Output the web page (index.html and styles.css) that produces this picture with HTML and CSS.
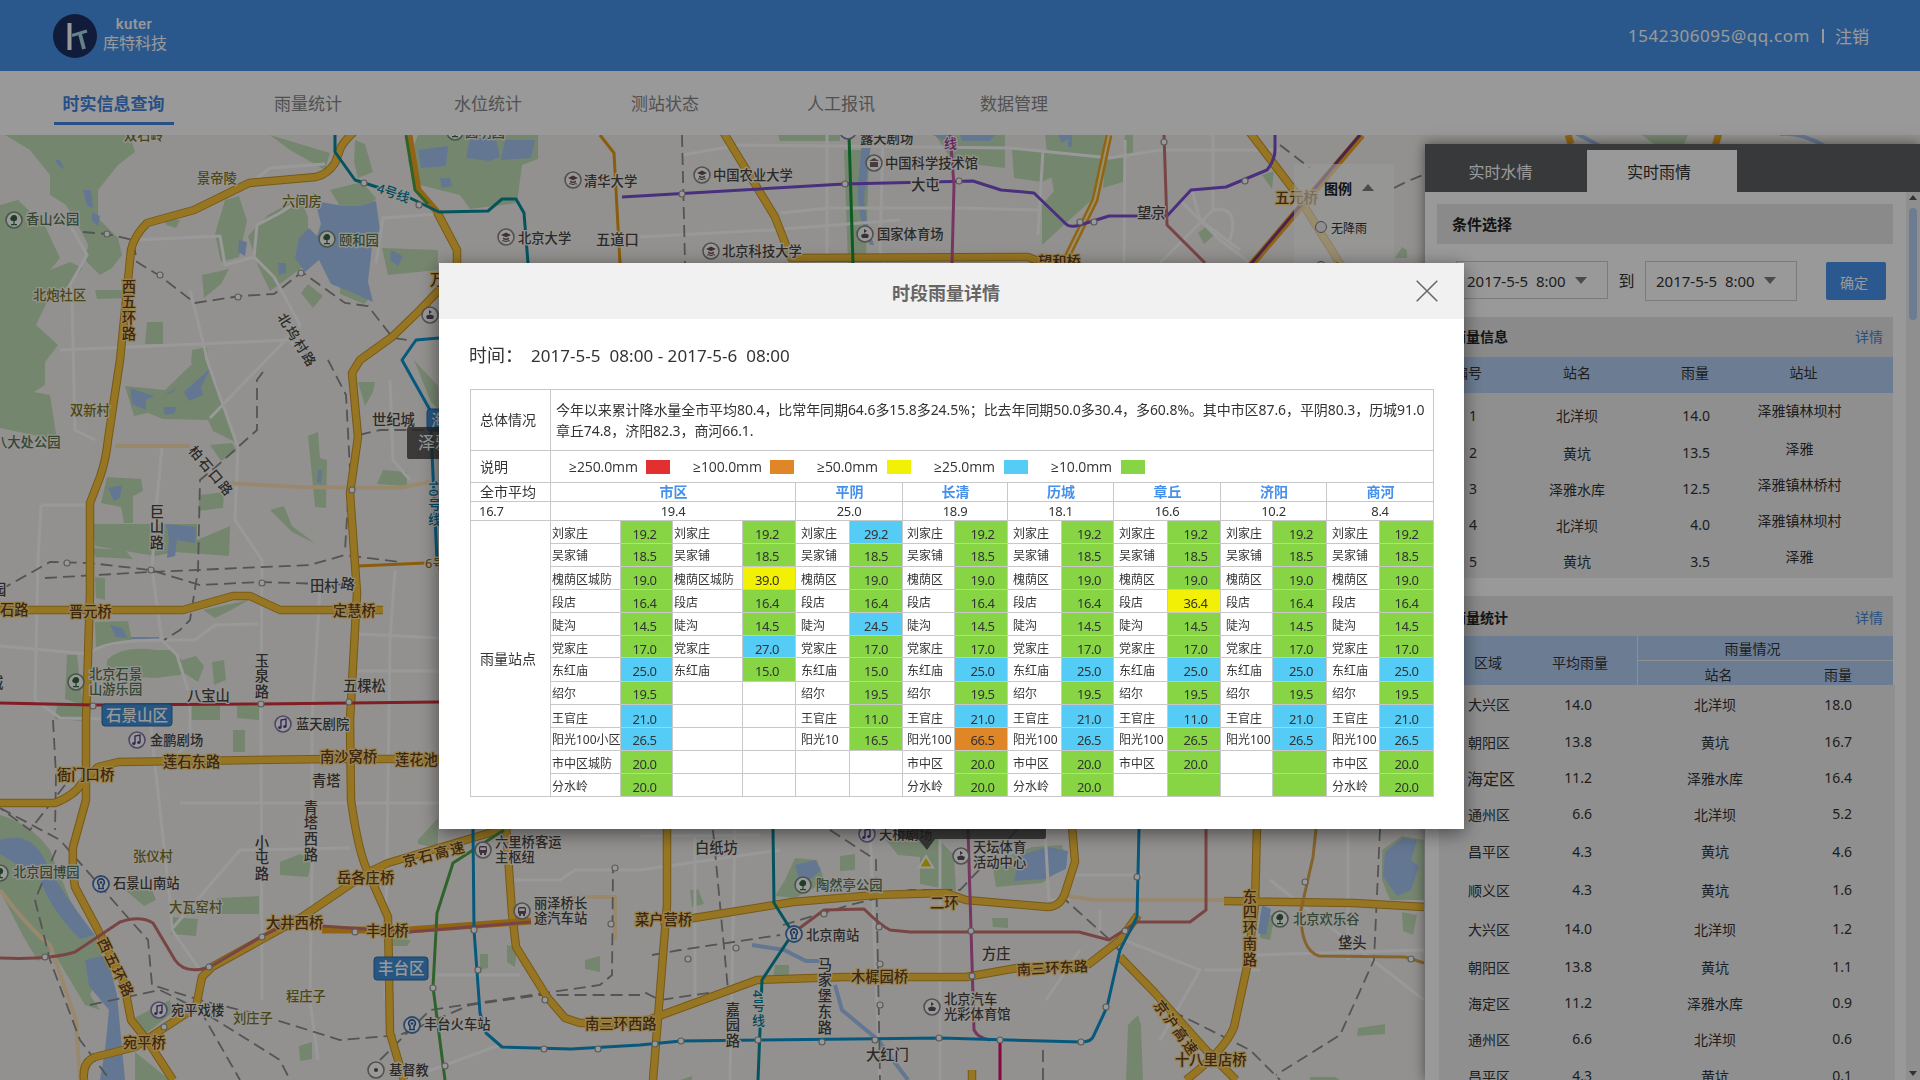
FILE: index.html
```html
<!DOCTYPE html>
<html lang="zh-CN">
<head>
<meta charset="utf-8">
<title>库特科技</title>
<link rel="stylesheet" href="styles.css">
</head>
<body>
<div class="page">
  <header class="topbar">
    <div class="brand">
      <svg class="brand-mark" width="44" height="44" viewBox="0 0 44 44">
        <circle cx="22" cy="22" r="22" fill="#1c2f60"/>
        <path d="M16.500 9v27" stroke="#fff" stroke-width="4"/>
        <path d="M19 21.500L34 17" stroke="#a9d8e6" stroke-width="3.200"/>
        <path d="M27 20l4 15" stroke="#a9d8e6" stroke-width="3.800"/>
      </svg>
      <div class="brand-text"><span class="brand-en">kuter</span><span class="brand-cn">库特科技</span></div>
    </div>
    <div class="account"><span class="mail">1542306095@qq.com</span><i class="bar"></i><span>注销</span></div>
  </header>
  <nav class="nav">
    <a class="nav-item active">时实信息查询</a>
    <a class="nav-item n2">雨量统计</a>
    <a class="nav-item n3">水位统计</a>
    <a class="nav-item n4">测站状态</a>
    <a class="nav-item n5">人工报讯</a>
    <a class="nav-item n6">数据管理</a>
  </nav>
  <main class="stage">
    <svg class="map" viewBox="0 135 1920 945" width="1920" height="945">
      <defs>
        <g id="poi"><circle r="8" fill="#fff" stroke="#8a8784" stroke-width="1.600"/></g>
        <g id="tree"><circle r="8" fill="#fff" stroke="#78907a" stroke-width="1.600"/><path d="M0-5a3 3 0 0 1 3 4a2 2 0 0 1-2 2h-.4V4H3v1.200h-6V4h2.400V1H-2a2.300 2.300 0 0 1-1-4a3 3 0 0 1 3-2z" fill="#36663f"/></g>
        <g id="school"><use href="#poi"/><path d="M-5-2L0-4.500 5-2 0 .3zM-3 .5v1.800q3 1.600 6 0V.5L0 1.800zM-4 3.500q2-.8 4 .6q2-1.400 4-.6v1q-2-.6-4 .8q-2-1.400-4-.8z" fill="#6b5350"/></g>
        <g id="music"><circle r="8" fill="#fff" stroke="#8579a8" stroke-width="1.600"/><path d="M-2 3.500V-4l5-1v7.500" fill="none" stroke="#5a4390" stroke-width="1.400"/><circle cx="-3.200" cy="3.500" r="1.600" fill="#5a4390"/><circle cx="1.800" cy="2.500" r="1.600" fill="#5a4390"/></g>
        <g id="flag"><use href="#poi"/><path d="M-1-5l3 2-3 2zM-4 1q4-3 8 0l-1 3h-6z" fill="#5c5060"/></g>
        <g id="bus"><use href="#poi"/><rect x="-4" y="-4" width="8" height="7" rx="1.500" fill="#6a5066"/><path d="M-2.800-2.500h5.600v2.500h-5.600z" fill="#fff"/><path d="M-3 3h2v2h-2zM1 3h2v2H1z" fill="#6a5066"/></g>
        <g id="rail"><circle r="8" fill="#fff" stroke="#4c78b5" stroke-width="1.800"/><path d="M-3 4.500h6M-2 3.500V1a3.400 3.400 0 1 1 4 0v2.500" fill="none" stroke="#2c5c9c" stroke-width="1.600"/><circle cy="-1.500" r="1.300" fill="#2c5c9c"/></g>
      </defs>
      <rect y="135" width="1920" height="945" fill="#f4f2ee"/>

      <g class="green">
        <path d="M5 135L30 150 50 175 50 195 66 205 79 227 88 245 85 260 100 275 112 268 122 255 118 238 98 218 98 190 118 165 135 152 130 135z"/>
        <path d="M0 205L18 200 45 226 60 258 50 270 70 262 83 268 66 287 48 300 36 325 58 345 45 362 45 385 34 392 50 395 57 440 0 428z"/>
        <path d="M270 135L330 153 325 170 290 150zM355 140l10 4 8 28-15 6-4-16zM418 135h120v24l-16 6-5 38-47 6-10-14-40-10-12-24z"/>
        <path d="M225 200l14-4 8 25-8 36-18 5-6-28zM268 215l32-18 8 20 0 46-24 18-14 10-12-25-10-30zM330 190l32-8 14 16-6 10-30-2zM382 248l56 2v20l-50 5zM202 275l27-6-8 15-17 14zM308 284l15 12-10 12-12-15zM340 270l32 26-8 8-24-10zM147 322h16v22h-18zM95 290h27l5 8-30 1zM192 350l15-3 1 20-17-4zM165 218l15 2-4 8-10-3z"/>
        <path d="M125 386l40 4 28-27 12-5 12 25 20 60-24-12-5-11-45-1-15-6-14 3zM210 445l22-2 5 8-16 10zM107 477l34 2 2 12-10 5v27h-9l-3-16-20-4zM200 495l24-3-1 16-25 3zM93 524l104 0v16l33-14-1 30-54-4-20 4-60-10zM93 548l32 2 8 9-38-2zM308 436l10-4 2 26 7 2-1 48-11-1zM270 510l14-4 8 20 24 18-24-12zM383 470l24 2v14l-30-2zM358 382l17 0-2 10-8 14zM414 360l24 26 1 24-8-8zM95 577l10 1v22l-9-2zM95 622l33-1 4 20-36 8zM203 610l46-10-18 10-16 8zM107 660q15-15 50-10l15 0 10 10 14-4 8 10-6 16-12-8-30 4-50-3zM212 662l12-2 2 20-12 5zM67 655l10 0 2 20 4 30-18-6zM57 706l26 0 0 15-28-2zM190 706h30v14h-30zM237 706h22v14l-22-2zM233 730h12v22h-12z"/>
        <path d="M0 815q30 8 50 35l20 50 28 45-30 12-16-6-14 10-15-25-23-45zM50 940l45-5 10 30-15 30 10 15-15-5-30-50zM130 1020l40-20 3 12-30 24zM135 1052l35 28h-35zM125 890l25-5 6 15-12 6zM280 862l20-8 12 6-4 17-28-2zM418 840l20-22v30l-20-4zM170 917l28 2-2 17-25-2zM217 898l42-2v18l-38 0zM480 954h8v14l-8 2zM507 945l10 2-2 20-8-5zM585 960l15-4v16l-15-3zM299 1046l13-4v17l-12 2zM385 938l26 2-4 6-16 0z"/>
        <path d="M778 135h62v6l-60 0zM844 150h25l-3 110-18 3zM935 135h70v33l-52-6zM1012 150h55v20l-25 12-28-4zM1045 135h60l-8 60-55 50 0-40 12-14-6-30zM1105 160l20-3-2 25-20 6zM1125 135h8v20l-10-2zM1262 175l12-4-2 18zM1198 233l10-8 6 10-10 9z"/>
        <path d="M690 890l8-1 6 15-12 3zM785 880l10-22 22 2 8 22-30 16-20-2zM840 856l15-2 0 16-15 1zM886 840l50-3 18 18 2 36-36-7 0-27-22-2zM992 862l40-15 30-2 5 20-25 18-46 4zM992 918h16v10l-15-1zM775 965l14 0 0 10-16 2zM1128 1025l10-10 3 10 2 55-17 0zM1260 915l15 0-5 25-10-2zM1382 850l20-14 22 4v60l-34 0-8-20zM1402 912l15 3-4 20-10-4zM1358 1028l27-4 0 10-28 2zM1395 258h12v-8l-5-3zM1642 135h46l-4 9h-30zM680 1080l12-4v4zM1310 1077h25l5 3h-30z"/>
      </g>
      <g class="water">
        <path d="M313 192l8 10 22 4 18 0 15-5 4 30-8 15-4 36 5 20-22-10-20-8-12-24-14 12-10-14 4-20 10-10 8 8 4-12z"/>
        <path d="M470 138l25-3 5 22-10 4-24-3zM505 140l30 0-4 18-30 2zM418 150l30-4-2 20-25 2zM440 178l10 0 2 8-10 2zM55 160l5 0 5 10-6-4zM83 190l8 0 2 18-6-2zM92 212l8 4-2 10-6-5zM239 240l8 2-2 14-7-4zM278 263l8 0 0 10-7 2zM391 250l12 6-5 10-8-6z"/>
        <path d="M130 388l24 8-8 4 0 10-14-6zM163 407l13 0-1 6-10 2zM165 395l12-8-5 6zM184 392l22-20 5-5-10 20 2 8-14 6zM166 524l30 3-1 16-18-3-2 16-8 2 2-20zM108 488l14-3-2 13-6 3zM110 625l12 3 6 10-12-1zM131 637h28v2h-28zM318 470l4 0-1 14-4-2z"/>
        <path d="M0 840q30-10 45 20 15 30 50 75l-15 4q-30-30-40-60l-40-25zM85 960l22-5 10 40 8 85h-25l5-30 4-40-20-24zM270 920l25-5-8 16z"/>
        <path d="M862 140l10-5-6 50q-6 20 8 60l-4 0q-14-30-12-60zM933 135h20l-10 5zM960 135h35l-5 6-28 0zM1058 135h14v12h-4v-8l-6 4zM795 865l20-5 6 10-14 12-8-2zM1020 855l28-8 20 4-2 18-22 10-30 2zM1385 852l18-14 14 2-6 20 8 6-8 24-14 6-14-20zM1262 905l9 4-5 26-8-2z"/>
      </g>
      <path class="river" d="M752 945L784 950 806 961H823M835 985L842 1010 878 1040 908 1080M1570 130L1600 146M1780 134Q1800 132 1825 146"/>

      <g class="minor">
        <path d="M255 180L270 168 325 164M135 240L220 236 225 265 254 257 274 277M69 223L87 255 70 285 72 300 75 430 95 440M274 277L300 325 210 418M254 257L257 225 280 213 300 200M376 263L383 218 439 214M60 350L290 340 305 360M190 290L205 350 207 360 238 447 235 520 262 560 261 720 262 1000"/>
        <path d="M162 447L155 520 152 570 162 640 177 655 188 690M42 505H90M41 505L38 560 35 700M0 646L90 654M90 654Q100 640 165 640H195L215 625 258 624M320 590L312 720M390 380L393 460 410 480M395 570L390 640 385 1000M359 634L439 638M358 671H439M35 700L60 718 160 720M0 652M150 720L170 900 172 930 200 970M171 930L240 850 350 848M165 770L190 740 190 700M180 803H439M312 720V860L310 1000 318 1060M511 880H560L575 870H640M437 975H520M404 1080L500 1045"/>
        <path d="M682 155L740 145 1010 148 1110 158 1160 150H1280M640 237L770 230 900 220M780 213L830 208H960L1040 210M827 135V263M883 135L880 250 885 263M1043 150L1038 235M1125 140L1124 263M1192 190L1200 220 1240 250M1213 135V210L1160 263M1213 210Q1240 205 1230 240M1180 200L1220 240 1250 263M640 870L780 850M640 836L760 835M695 835V1000M735 830L730 1080M870 830L880 1080M940 840V1080M1045 830L1049 900 1070 900M1072 875H1142M1100 910V940M1046 1000L1080 950M1124 940L1200 970 1160 1040M1205 970H1260M1255 955L1424 950M1348 829V960M1270 880L1424 1000"/>
      </g>
      <path class="subroad" d="M0 890Q30 930 50 945L76 1020 80 1080M115 446H190M225 483L300 487 400 488 430 482M1060 895L1095 900H1224M571 897H615V940"/>

      <g class="railway">
        <path d="M83 232L107 234 133 240 137 262 160 276 195 303 240 296 274 294 302 272 345 303 368 306 393 338 408 340"/>
        <path d="M263 372L257 380 257 430 218 465 200 480 198 570 190 620 180 630 164 640"/>
        <path d="M0 590L50 562 90 563 150 570 200 585 260 582 355 585M45 578L150 572 310 565 345 555 400 562M328 360L346 395 350 470 345 550M359 435L380 430H430"/>
        <path d="M53 720L56 775 55 830M65 785L30 830 0 808M0 808L60 840 130 920 148 940 152 985 200 1000 260 1015 340 1040 400 1035 470 1005 540 995 640 995M56 850L35 900 50 960 80 1040 110 1080M90 1005L160 990 200 1010 280 1060 290 1080M200 1010L240 1080M380 1060L430 1010 600 985 612 975 613 870"/>
        <path d="M682 135L685 263M713 830L728 990 660 1000 640 990M783 925L850 905 910 890 960 890 1018 829M830 830L876 860 880 1080M1060 895L1110 940 1170 1010 1250 1050 1280 1080M1380 829L1374 960 1340 1035 1276 1075M652 955L680 950 780 935M1280 145L1310 168M1394 188Q1420 175 1424 175M1043 1080V1050"/>
      </g>

      <g class="road-case">
        <path id="w1" d="M356 130Q345 140 341 147L335 163Q328 174 316 177L249 183 194 210 147 223Q134 236 131 250L129 270 120 360 108 440Q106 460 100 477L90 503 90 593 86 720 86 800 73 847Q72 870 75 887L98 930 124 983 131 1020 147 1040 173 1080"/>
        <path id="w2" d="M84 1080Q82 1062 95 1057L135 1047 196 1007 202 977 212 967 302 917 367 873 388 863 506 828M0 803H55Q75 795 82 783L98 767 118 762 330 759H439M0 610L183 610 233 596H250L280 610H383"/>
        <path id="w3" d="M437 212L457 250V280L439 290 420 310 392 337 360 360 352 373 358 437 350 493 357 593 350 720 351 800Q358 850 367 870L388 917 390 1033 404 1080M506 826L512 913 516 947 547 997 565 1018 580 1023H640L757 980 844 977H966L1017 968 1089 964 1120 940 1138 915"/>
        <path id="w4" d="M722 130L775 217 791 258 1028 257 1048 265M667 826V905L653 1080M660 921L694 918 793 902 875 895 946 893 966 900 1048 907Q1062 906 1066 890L1075 862 1072 826M1257 826L1255 905 1247 967 1234 1027Q1225 1050 1186 1080M1224 901L1354 903 1424 907M1120 957L1155 993 1206 1050 1236 1080M1248 130L1296 193 1344 270M972 1070V1080"/>
      </g>
      <g class="road"><use href="#w1"/><use href="#w2"/><use href="#w3"/><use href="#w4"/></g>
      <g class="expressway">
        <path d="M409 135L418 190 437 212M1109 135L1095 200 1064 263M322 930H408L531 921M1362 135L1251 265M1720 130L1714 150M1568 135L1571 144"/>
      </g>
      <g class="expressway-core"><path d="M1109 135L1095 200 1064 263"/><path class="violet" d="M1360 135L1250 265"/></g>

      <g class="metro">
        <path stroke="#088c9c" d="M335 135V152L355 180 408 197 439 212 488 211 502 199H516L524 213 528 263M773 829L774 903 793 933 762 980 758 1080"/>
        <path stroke="#7a4fd0" d="M622 197L844 184 973 181 1001 190 1034 193 1066 224Q1070 228 1080 225L1109 216H1167L1191 190 1226 187 1267 170Q1275 160 1275 150V135"/>
        <path stroke="#169a3b" d="M849 135L853 263"/>
        <path stroke="#4fa648" d="M406 135L415 190 428 204M504 830L453 863 437 913 433 987 445 1080"/>
        <path stroke="#c45aa2" d="M950 135L954 185 952 263M968 829L974 1030Q978 1038 990 1040"/>
        <path stroke="#e10a72" d="M1000 1040V1080"/>
        <path stroke="#c97472" d="M1164 135L1167 225 1205 263M0 958Q50 960 75 952L120 922Q140 915 153 923L175 960Q185 975 210 967L261 937 290 922M322 926L408 932 531 922M793 933L824 910 864 909Q880 925 890 930L910 932H1079L1109 940 1137 922H1190L1206 910V829"/>
        <path stroke="#0a95cf" d="M439 338L416 340 402 360 430 410 437 560M473 829L474 930 480 1013 486 1033 502 1047 571 1049 640 1045 681 1041 941 1038 1081 1042Q1092 1042 1094 1035L1107 1007 1120 950 1137 917 1139 829"/>
        <path stroke="#d5313e" d="M0 703L93 705 260 704 439 702"/>
        <path stroke="#e69b13" d="M600 135L614 153 620 263M358 566L425 563"/>
        <path stroke="#dfa64b" d="M1316 829L1313 857 1301 910Q1300 950 1319 956L1405 957 1424 963"/>
      </g>
      <g class="stop">
        <circle cx="107" cy="234" r="3"/><circle cx="160" cy="275" r="3"/><circle cx="238" cy="297" r="3"/><circle cx="301" cy="273" r="3"/><circle cx="364" cy="183" r="3"/><circle cx="419" cy="205" r="3"/><circle cx="682" cy="194" r="3"/><circle cx="845" cy="184" r="3"/><circle cx="959" cy="181" r="3"/><circle cx="1080" cy="222" r="3"/><circle cx="1094" cy="222" r="3"/><circle cx="1164" cy="142" r="3"/><circle cx="1245" cy="181" r="3"/><circle cx="67" cy="563" r="3"/><circle cx="151" cy="570" r="3"/><circle cx="262" cy="583" r="3"/><circle cx="352" cy="490" r="3"/><circle cx="93" cy="706" r="3"/><circle cx="261" cy="704" r="3"/><circle cx="349" cy="702" r="3"/><circle cx="45" cy="957" r="3"/><circle cx="209" cy="967" r="3"/><circle cx="262" cy="937" r="3"/><circle cx="355" cy="932" r="3"/><circle cx="474" cy="930" r="3"/><circle cx="478" cy="970" r="3"/><circle cx="433" cy="988" r="3"/><circle cx="445" cy="1066" r="3"/><circle cx="544" cy="1049" r="3"/><circle cx="598" cy="1049" r="3"/><circle cx="611" cy="924" r="3"/><circle cx="615" cy="868" r="3"/><circle cx="545" cy="1000" r="3"/><circle cx="164" cy="1027" r="3"/><circle cx="655" cy="1044" r="3"/><circle cx="681" cy="1041" r="3"/><circle cx="758" cy="1040" r="3"/><circle cx="822" cy="1042" r="3"/><circle cx="875" cy="1040" r="3"/><circle cx="939" cy="1038" r="3"/><circle cx="1000" cy="1040" r="3"/><circle cx="1081" cy="1042" r="3"/><circle cx="1106" cy="1007" r="3"/><circle cx="971" cy="931" r="3"/><circle cx="972" cy="976" r="3"/><circle cx="1125" cy="931" r="3"/><circle cx="1137" cy="877" r="3"/><circle cx="1305" cy="882" r="3"/><circle cx="1411" cy="959" r="3"/><circle cx="824" cy="914" r="3"/><circle cx="879" cy="927" r="3"/><circle cx="880" cy="964" r="3"/><circle cx="880" cy="1005" r="3"/><circle cx="736" cy="948" r="3"/><circle cx="688" cy="959" r="3"/>
      </g>

      <use href="#tree" x="14" y="220"/><use href="#tree" x="327" y="239"/><use href="#tree" x="455" y="132"/><use href="#tree" x="76" y="682"/><use href="#tree" x="0" y="873"/><use href="#tree" x="803" y="885"/><use href="#tree" x="1280" y="919"/>
      <use href="#school" x="573" y="180"/><use href="#school" x="506" y="237"/><use href="#school" x="702" y="175"/><use href="#school" x="711" y="251"/><use href="#poi" x="874" y="163"/><path d="M869 161l5-3 5 3zm1 1h8v5h-8z" fill="#7a6468"/><circle cx="848" cy="131" r="8" fill="#fff" stroke="#8579a8" stroke-width="1.600"/>
      <use href="#flag" x="865" y="234"/><use href="#flag" x="430" y="315"/><use href="#flag" x="961" y="856"/><use href="#flag" x="932" y="1007"/>
      <use href="#music" x="137" y="740"/><use href="#music" x="283" y="724"/><use href="#music" x="159" y="1010"/><use href="#music" x="867" y="834"/>
      <use href="#rail" x="101" y="884"/><use href="#rail" x="412" y="1025"/><use href="#rail" x="794" y="934"/>
      <use href="#bus" x="483" y="850"/><use href="#bus" x="522" y="911"/><use href="#poi" x="376" y="1070"/><circle cx="376" cy="1070" r="2" fill="#555"/>

      <g class="label">
        <text x="584" y="186">清华大学</text><text x="518" y="243">北京大学</text><text x="713" y="180">中国农业大学</text><text x="722" y="256">北京科技大学</text><text x="860" y="143">露天剧场</text><text x="885" y="168">中国科学技术馆</text><text x="877" y="239">国家体育场</text>
        <text class="lg" x="596" y="245">五道口</text><text class="lg" x="911" y="190">大屯</text><text class="lg" x="1137" y="218">望京</text><text class="lg" x="372" y="425">世纪城</text>
        <text x="150" y="745">金鹏剧场</text><text x="296" y="729">蓝天剧院</text><text class="lg" x="187" y="701">八宝山</text><text class="lg" x="343" y="691">五棵松</text><text class="lg" x="-8" y="595">园</text><text class="lg" x="-11" y="688">城</text><text class="lg" x="310" y="591">田村</text><text class="lg" transform="translate(340 588) rotate(8)">路</text><text class="lg" x="312" y="786">青塔</text>
        <text x="113" y="888">石景山南站</text><text x="171" y="1015">宛平戏楼</text><text x="424" y="1029">丰台火车站</text><text x="389" y="1075">基督教</text><text x="495" y="847">六里桥客运</text><text x="495" y="862">主枢纽</text><text x="534" y="908">丽泽桥长</text><text x="534" y="923">途汽车站</text>
        <text class="lg" x="695" y="853">白纸坊</text><text x="879" y="839">天桥剧场</text><text x="973" y="852">天坛体育</text><text x="973" y="867">活动中心</text><text x="806" y="940">北京南站</text><text class="lg" x="982" y="959">方庄</text><text x="944" y="1004">北京汽车</text><text x="944" y="1019">光彩体育馆</text><text class="lg" x="866" y="1060">大红门</text><text class="lg" x="1338" y="948">垡头</text>
        <text class="down lg" x="156" y="504">巨山路</text><text class="down lg" x="261" y="653">玉泉路</text><text class="down lg" x="261" y="835">小屯路</text><text class="down lg" x="310" y="800">青塔西路</text><text class="down lg" x="732" y="1002">嘉园路</text><text class="down lg" x="824" y="957">马家堡东路</text>
        <text class="slant" transform="translate(277 317) rotate(58)">北坞村路</text><text class="slant" transform="translate(188 451) rotate(50)">柏石口路</text>
      </g>
      <g class="label olive">
        <text x="124" y="140">双石岭</text><text x="197" y="183">景帝陵</text><text x="282" y="206">六间房</text><text x="33" y="300">北炮社区</text><text x="70" y="415">双新村</text><text x="133" y="861">张仪村</text><text x="169" y="912">大瓦窑村</text><text x="286" y="1001">程庄子</text><text x="233" y="1023">刘庄子</text>
      </g>
      <g class="label park">
        <text x="26" y="224">香山公园</text><text x="339" y="245">颐和园</text><text x="465" y="137">圆明园</text><text x="-6" y="447">八大处公园</text><text x="89" y="679">北京石景</text><text x="89" y="694">山游乐园</text><text x="13" y="877">北京园博园</text><text x="816" y="890">陶然亭公园</text><text x="1293" y="924">北京欢乐谷</text>
      </g>
      <g class="label roadname">
        <text class="down" x="128" y="279">西五环路</text><text x="0" y="615">石路</text><text x="69" y="617">晋元桥</text><text x="333" y="616">定慧桥</text><text x="57" y="780">衙门口桥</text><text x="163" y="767">莲石东路</text><text x="320" y="762">南沙窝桥</text><text x="395" y="765">莲花池</text><text x="337" y="883">岳各庄桥</text><text x="266" y="928">大井西桥</text><text x="366" y="936">丰北桥</text><text x="123" y="1048">宛平桥</text><text x="585" y="1029">南三环西路</text><text x="635" y="925">菜户营桥</text><text x="930" y="908">二环</text><text x="851" y="982">木樨园桥</text><text transform="translate(1017 975) rotate(-3)">南三环东路</text><text x="1175" y="1065">十八里店桥</text><text class="down" x="1249" y="889">东四环南路</text><text class="slant" transform="translate(404 867) rotate(-14)">京石高速</text><text class="slant" transform="translate(97 941) rotate(64)">西五环路</text><text class="slant" transform="translate(1153 1005) rotate(54)">京沪高速</text><text x="430" y="285">万</text><text x="1275" y="203">五元桥</text><text x="1038" y="267">望和桥</text>
      </g>
      <g class="label line"><text fill="#087c9c" transform="translate(376 192) rotate(19)">4号线</text><text class="down" fill="#087c9c" x="758" y="990">4号线</text><text class="down" fill="#0879b0" x="434" y="480">10号线</text><text x="944" y="148" fill="#a53491">线</text><text x="425" y="568" fill="#a56d10">6号</text></g>
      <g class="district"><rect x="102" y="704" width="70" height="22" rx="3"/><text x="106" y="721">石景山区</text><rect x="374" y="957" width="54" height="23" rx="3"/><text x="378" y="974">丰台区</text><rect x="427" y="409" width="60" height="22" rx="3"/><text x="431" y="426">海淀区</text></g>
      <g class="tip"><rect x="407" y="427" width="120" height="32" rx="2"/><text x="418" y="449">泽雅</text><rect x="898" y="800" width="148" height="39" rx="2"/><path d="M918 839h17l-8 11z"/></g>
      <path d="M926 856l7 11.500h-14z" fill="#e3cb08" stroke="#fff" stroke-width="2"/>
    </svg>

    <div class="legend-box">
      <div class="legend-title">图例<i class="caret up"></i></div>
      <div class="legend-row"><i class="radio"></i>无降雨</div>
      <div class="legend-row"><i class="radio"></i>小雨</div>
    </div>

    <aside class="panel">
      <div class="tabs"><span class="tab">实时水情</span><span class="tab on">实时雨情</span></div>
      <div class="panel-main">
        <div class="panel-body">
          <div class="section-head cond">条件选择</div>
          <div class="filter">
            <div class="select">2017-5-5&nbsp; 8:00<i class="caret"></i></div>
            <span class="to">到</span>
            <div class="select tall">2017-5-5&nbsp; 8:00<i class="caret"></i></div>
            <button class="ok">确定</button>
          </div>
          <div class="section-head"><span>雨量信息</span><a>详情</a></div>
          <div class="t1 t1-head"><span>编号</span><span>站名</span><span>雨量</span><span>站址</span></div>
          <div class="t1 t1-body">
            <span>1</span><span>北洋坝</span><span>14.0</span><span>泽雅镇林坝村</span>
            <span>2</span><span>黄坑</span><span>13.5</span><span>泽雅</span>
            <span>3</span><span>泽雅水库</span><span>12.5</span><span>泽雅镇林桥村</span>
            <span>4</span><span>北洋坝</span><span>4.0</span><span>泽雅镇林坝村</span>
            <span>5</span><span>黄坑</span><span>3.5</span><span>泽雅</span>
          </div>
          <div class="section-head second"><span>雨量统计</span><a>详情</a></div>
          <div class="t2-head">
            <span class="area">区域</span><span class="avg">平均雨量</span><span class="group">雨量情况</span><span class="sub">站名</span><span class="sub2">雨量</span>
          </div>
          <div class="t2-body">
            <span>大兴区</span><span>14.0</span><span>北洋坝</span><span>18.0</span>
            <span>朝阳区</span><span>13.8</span><span>黄坑</span><span>16.7</span>
            <span class="big">海定区</span><span>11.2</span><span>泽雅水库</span><span>16.4</span>
            <span>通州区</span><span>6.6</span><span>北洋坝</span><span>5.2</span>
            <span>昌平区</span><span>4.3</span><span>黄坑</span><span>4.6</span>
            <span>顺义区</span><span>4.3</span><span>黄坑</span><span>1.6</span>
            <span>大兴区</span><span>14.0</span><span>北洋坝</span><span>1.2</span>
            <span>朝阳区</span><span>13.8</span><span>黄坑</span><span>1.1</span>
            <span>海定区</span><span>11.2</span><span>泽雅水库</span><span>0.9</span>
            <span>通州区</span><span>6.6</span><span>北洋坝</span><span>0.6</span>
            <span>昌平区</span><span>4.3</span><span>黄坑</span><span>0.1</span>
          </div>
        </div>
        <div class="scroll"><i class="caret up small"></i><i class="thumb"></i><i class="caret small end"></i></div>
      </div>
    </aside>
  </main>
</div>

<div class="overlay">
  <section class="modal">
    <header class="modal-head">
      <h2>时段雨量详情</h2>
      <svg class="close" width="22" height="22" viewBox="0 0 22 22"><path d="M.7.700L21.300 21.300M21.300.7L.7 21.300" stroke="#666" stroke-width="1.500"/></svg>
    </header>
    <div class="modal-body">
      <p class="period"><span>时间<em>：</em></span><b>2017-5-5&nbsp; 08:00 - 2017-5-6&nbsp; 08:00</b></p>
      <div class="report">
        <div class="cell head">总体情况</div>
        <div class="cell summary"><p>今年以来累计降水量全市平均80.4<em>，</em>比常年同期64.6多15.8多24.5%<em>；</em>比去年同期50.0多30.4<em>，</em>多60.8%。其中市区87.6<em>，</em>平阴80.3<em>，</em>历城91.0<br>章丘74.8<em>，</em>济阳82.3<em>，</em>商河66.1.</p></div>
        <div class="cell head">说明</div>
        <div class="cell keys">
          <span>≥250.0mm<i class="red"></i></span><span>≥100.0mm<i class="orange"></i></span><span class="short">≥50.0mm<i class="yellow"></i></span><span class="short">≥25.0mm<i class="blue"></i></span><span class="short">≥10.0mm<i class="lime"></i></span>
        </div>
        <div class="cell head">全市平均</div>
        <div class="cell city">市区</div><div class="cell city">平阴</div><div class="cell city">长清</div><div class="cell city">历城</div><div class="cell city">章丘</div><div class="cell city">济阳</div><div class="cell city">商河</div>
        <div class="cell mean first">16.7</div>
        <div class="cell mean">19.4</div><div class="cell mean">25.0</div><div class="cell mean">18.9</div><div class="cell mean">18.1</div><div class="cell mean">16.6</div><div class="cell mean">10.2</div><div class="cell mean">8.4</div>
        <div class="cell head">雨量站点</div>
        <div class="stations" id="stations"></div>
      </div>
    </div>
  </section>
</div>
<script src="stations.js"></script>
</body>
</html>
```
FILE: styles.css
```css
* { box-sizing: border-box; }
body {
  margin: 0;
  height: 1080px;
  overflow: hidden;
  font-family: "Noto Sans", "Noto Sans CJK SC", sans-serif;
  font-size: 14px;
  color: #333;
}
i { font-style: normal; display: block; }
em { font-style: normal; font-family: "Noto Sans CJK TC", sans-serif; }
.page { height: 1080px; display: flex; flex-direction: column; }

.topbar {
  height: 71px;
  flex: none;
  display: flex;
  justify-content: space-between;
  align-items: center;
  padding: 0 51px 0 53px;
  background: #4893ea;
  color: #fff;
}
.brand { display: flex; gap: 6px; align-items: center; }
.brand-text { display: flex; flex-direction: column; align-items: center; padding-bottom: 2px; }
.brand-en { font: 500 15px/17px Roboto, sans-serif; letter-spacing: .4px; margin-right: 2px; }
.brand-cn { font-size: 16px; line-height: 20px; }
.account { display: flex; align-items: center; font-size: 17px; }
.mail { letter-spacing: .57px; }
.bar { width: 2px; height: 14px; margin: 0 11px 0 12px; background: #fff; }

.nav {
  height: 64px;
  flex: none;
  display: flex;
  background: #fff;
  padding-left: 54px;
}
.nav-item { font-size: 17px; line-height: 24px; padding-top: 21px; color: #888; white-space: nowrap; }
.active {
  width: 120px;
  height: 54px;
  text-align: center;
  font-weight: 700;
  color: #4486e0;
  border-bottom: 3px solid #4486e0;
  margin-right: 100px;
  padding-right: 1px;
}
.n2 { margin-right: 112px; }
.n3 { margin-right: 109px; }
.n4 { margin-right: 108px; }
.n5 { margin-right: 105px; }

.stage { position: relative; height: 945px; flex: none; display: flex; justify-content: flex-end; }
.map { position: absolute; left: 0; top: 0; }
.green path { fill: #c4dfba; }
.water path { fill: #a7c6f4; }
.river { fill: none; stroke: #a7c6f4; stroke-width: 4; }
.minor { fill: none; stroke: #fff; stroke-width: 3; }
.subroad { fill: none; stroke: #fde5b8; stroke-width: 4; }
.railway { fill: none; stroke: #8c8c8c; stroke-width: 1.800px; stroke-dasharray: 12 6; }
.road-case { fill: none; stroke: #c69328; stroke-width: 8.500px; stroke-linejoin: round; }
.road { fill: none; stroke: #fcc53b; stroke-width: 6.500px; stroke-linejoin: round; }
.expressway { fill: none; stroke: #f2a722; stroke-width: 7; }
.expressway-core { fill: none; stroke: #fff1b5; stroke-width: 2; }
.expressway-core .violet { stroke: #7d3d80; stroke-width: 3; }
.metro { fill: none; stroke-width: 3; stroke-linejoin: round; }
.stop circle { fill: #fff; stroke: #999; stroke-width: 1.200px; }
.label { font-size: 13.300px; font-weight: 500; fill: #4a4645; stroke: #f8f6f1; stroke-width: 2.500px; paint-order: stroke; stroke-linejoin: round; }
.label .lg { font-size: 14.300px; }
.label .down { writing-mode: vertical-rl; letter-spacing: 1.500px; }
.label .slant { letter-spacing: 2px; }
.label.olive { fill: #7a7528; }
.label.park { fill: #567759; }
.label.roadname { fill: #69401a; stroke: #ffdc85; font-size: 14.300px; }
.label.line { font-size: 13px; }
.district rect { fill: #408fd8; stroke: #2a6db0; }
.district text { fill: #fff; font-size: 15.500px; font-weight: 500; }
.tip { fill: #3c3c3c; fill-opacity: .8; }
.tip text { fill: #fff; fill-opacity: 1; font-size: 17px; }

.caret { width: 0; height: 0; border: solid transparent; border-width: 7px 6px 0; border-top-color: #7d7d7d; }
.caret.up { border-width: 0 6px 7px; border-bottom-color: #7d7d7d; }
.caret.small { border-width: 5px 4px 0; border-top-color: #555; }
.caret.up.small { border-width: 0 4px 5px; border-bottom-color: #555; }

.legend-box {
  position: relative;
  width: 100px;
  height: 300px;
  margin: 29px 31px 0 0;
  padding: 12px 0 0 21px;
  background: rgba(255,255,255,.62);
}
.legend-title { display: flex; align-items: center; gap: 10px; height: 24px; padding-left: 9px; font-weight: 700; color: #222; }
.legend-row { display: flex; align-items: center; gap: 4px; height: 24px; margin-top: 16px; font-size: 12px; }
.legend-title .caret { margin-top: -1px; }
.radio { width: 12px; height: 12px; margin-top: -2px; border: 1px solid #777; border-radius: 50%; background: #eee; }

.panel {
  position: relative;
  width: 495px;
  margin-top: 9px;
  background: #fff;
  box-shadow: 0 0 12px rgba(0,0,0,.5);
  display: flex;
  flex-direction: column;
}
.tabs { height: 48px; flex: none; display: flex; align-items: flex-end; padding-left: 12px; background: #5d5f62; }
.tab { width: 150px; height: 42px; line-height: 45px; text-align: center; font-size: 16px; color: #fff; padding-right: 23px; }
.tab.on { padding-right: 6px; background: #fff; color: #333; }
.panel-main { display: flex; justify-content: space-between; height: 888px; overflow: hidden; }
.panel-body { width: 456px; margin-left: 12px; padding-top: 12px; }
.section-head {
  height: 40px;
  display: flex;
  justify-content: space-between;
  padding: 0 10px 0 15px;
  line-height: 40px;
  background: #e6e6e6;
  color: #222;
  font-weight: 700;
}
.section-head a { color: #4486d8; font-weight: 400; }
.section-head.cond { font-size: 15px; padding-left: 15px; }
.section-head.second { line-height: 44px; margin-top: 18px; }
.filter { height: 73px; display: flex; align-items: flex-start; padding: 17px 7px 0 19px; }
.select { width: 152px; height: 38px; border: 1px solid #cfcfcf; padding-left: 10px; line-height: 41px; font-size: 15px; display: flex; align-items: center; gap: 9px; white-space: nowrap; padding-top: 2px; }
.select .caret { margin-top: -1px; }
.select.tall { height: 40px; padding-top: 1px; }
.select.tall .caret { margin-top: -2px; }
.to { width: 37px; text-align: center; font-size: 16px; line-height: 41px; }
.ok { width: 60px; height: 38px; margin: 1px 0 0 29px; border: 0; border-radius: 2px; padding: 1px 4px 0 0; background: #4893ee; color: #fff; font: 14px "Noto Sans CJK SC", sans-serif; }
.t1 { display: grid; grid-template-columns: 72px 136px 100px 116px; text-align: center; align-items: center; }
.t1-head { height: 36px; background: #b5d1f5; padding-bottom: 6px; }
.t1-head span:first-child { padding-right: 10px; }
.t1-head span:last-child { padding-left: 1px; }
.t1-body { height: 185px; background: #efefef; padding-top: 3px; grid-template-rows: 38px 37px 35px 37px 36px; }
.t1-body span:nth-child(4n+3) { text-align: right; padding-right: 35px; }
.t1-body span:nth-child(4n) { padding: 0 7px 10px 0; white-space: nowrap; }
.t2-head {
  display: grid;
  grid-template: 25px 24px / 102px 99px 161px 94px;
  height: 49px;
  background: #b5d1f5;
  text-align: center;
  line-height: 25px;
}
.t2-head .area, .t2-head .avg { grid-row: 1 / 3; line-height: 53px; }
.t2-head .avg { border-right: 1px solid #eee; padding-right: 16px; grid-column: 2; }
.t2-head .group { grid-column: 3 / 5; border-bottom: 1px solid #eee; padding-right: 26px; }
.t2-head .sub { line-height: 27px; }
.t2-head .sub2 { padding-right: 16px; line-height: 27px; }
.t2-body {
  display: grid;
  grid-template-columns: 88px 110px 158px 100px;
  grid-template-rows: 38px 37px 35px 37px 38px 39px 39px 37px 35px 37px 37px;
  align-items: center;
  width: 456px;
  margin-left: 2px;
  background: #efefef;
}
.t2-body span:nth-child(4n+1) { padding-left: 29px; }
.t2-body .big:nth-child(4n+1) { font-size: 16px; padding-left: 28px; white-space: nowrap; }
.t2-body span:nth-child(4n+2) { text-align: right; padding-right: 45px; }
.t2-body span:nth-child(4n+3) { text-align: center; padding-right: 2px; }
.t2-body span:nth-child(4n) { text-align: right; padding-right: 43px; }
.scroll { width: 14px; height: 888px; background: #efefef; display: flex; flex-direction: column; align-items: center; padding: 3px 0 4px; }
.thumb { width: 8px; height: 112px; margin: 8px 0 auto; border-radius: 4px; background: #b5d1f5; }

.overlay { position: fixed; inset: 0; background: rgba(0,0,0,.4); padding: 263px 0 0 439px; }
.modal { width: 1025px; height: 566px; background: #fff; box-shadow: 0 4px 18px rgba(0,0,0,.5); }
.modal-head { height: 56px; background: #f1f1f1; display: grid; grid-template-columns: 1fr 22px 26px; align-items: center; }
.modal-head h2 { margin: 4px 0 0 37px; text-align: center; font-size: 18px; line-height: 24px; color: #666; }
.modal-body { padding: 0 31px; }
.period { display: flex; margin: 0; height: 70px; padding-top: 23px; line-height: 24px; font-size: 18px; }
.period span { width: 62px; margin-left: -1px; white-space: nowrap; }
.period b { font-weight: 400; font-size: 17px; line-height: 27px; letter-spacing: .04px; }
.report {
  width: 964px;
  border: solid #c8c8c8;
  border-width: 1px 0 0 1px;
  display: grid;
  grid-template-columns: 80px 245px 107px 105px 106px 107px 106px 107px;
  grid-template-rows: 61px 32px 19px 19px 276px;
}
.cell { border: solid #c8c8c8; border-width: 0 1px 1px 0; display: flex; align-items: center; justify-content: center; overflow: hidden; white-space: nowrap; line-height: 18px; }
.head { justify-content: flex-start; padding-left: 9px; }
.summary, .keys { grid-column: 2 / -1; justify-content: flex-start; }
.summary { padding-left: 5px; letter-spacing: -.08px; }
.summary p { margin: 0; line-height: 20px; }
.keys { padding-left: 18px; font-family: "Open Sans", sans-serif; padding-top: 1px; }
.keys span { width: 124px; display: flex; align-items: center; justify-content: space-between; padding-right: 23px; letter-spacing: -.1px; }
.keys .short { width: 117px; }
.keys i { width: 24px; height: 14px; }
.city { color: #4590ec; font-weight: 700; padding-left: 1px; }
.mean { font-size: 13px; letter-spacing: -.3px; }
.first { justify-content: flex-start; padding-left: 8px; }
.stations {
  grid-column: 2 / -1;
  display: grid;
  grid-auto-flow: column;
  grid-template-columns: 70px 52px 70px 53px 54px 53px 52px 53px 54px 52px 54px 53px 52px 54px 53px 54px;
  grid-template-rows: 23px 23px 23px 23px 23px 22px 24px 23px 23px 23px 23px 23px;
}
.st { border: solid #c8c8c8; border-width: 0 1px 1px 0; white-space: nowrap; font-size: 12px; line-height: 18px; padding: 4px 0 0 5px; }
.st.near { padding-left: 1px; }
.st.snug { padding-left: 4px; }
.val { text-align: center; font-size: 13px; letter-spacing: -.4px; padding-left: 0; }
.val.left { padding-right: 4px; }
.val.right { padding-left: 3px; }
.st.raised { padding-top: 3px; }
.st.lowered { padding-top: 5px; }
.lime { background: #87d545; }
.blue { background: #55ccf5; }
.yellow { background: #f1f005; }
.orange { background: #df8626; }
.red { background: #e23030; }
```
FILE: stations.js
```js
// Each column pair: station names, readings, name class, reading class.
// Suffix b/y/o picks the level colour, "-" is an empty cell, "g" an empty lime cell.
const long = "刘家庄 吴家铺 槐荫区城防 段店 陡沟 党家庄 东红庙 绍尔 王官庄 阳光100小区 市中区城防 分水岭";
const short = "刘家庄 吴家铺 槐荫区 段店 陡沟 党家庄 东红庙 绍尔 王官庄 阳光100 市中区 分水岭";
const columns = [
  [long, "19.2 18.5 19.0 16.4 14.5 17.0 25.0b 19.5 21.0b 26.5b 20.0 20.0", " near", " left"],
  [long, "19.2 18.5 39.0y 16.4 14.5 27.0b 15.0 - - - - -", " near", " left"],
  [short.replace("100", "10"), "29.2b 18.5 19.0 16.4 24.5b 17.0 15.0 19.5 11.0 16.5 - -", "", ""],
  [short, "19.2 18.5 19.0 16.4 14.5 17.0 25.0b 19.5 21.0b 66.5o 20.0 20.0", " snug", " right"],
  [short, "19.2 18.5 19.0 16.4 14.5 17.0 25.0b 19.5 21.0b 26.5b 20.0 20.0", "", " right"],
  [short, "19.2 18.5 19.0 36.4y 14.5 17.0 25.0b 19.5 11.0b 26.5 20.0 g", "", " right"],
  [short, "19.2 18.5 19.0 16.4 14.5 17.0 25.0b 19.5 21.0b 26.5b g g", "", " right"],
  [short, "19.2 18.5 19.0 16.4 14.5 17.0 25.0b 19.5 21.0b 26.5b 20.0 20.0", "", ""]
];
const level = { b: "blue", y: "yellow", o: "orange" };
const shift = { 1: " raised", 7: " raised", 8: " lowered", 9: " raised" };
const box = document.getElementById("stations");

function add(cls, text) {
  const el = document.createElement("div");
  el.className = cls;
  el.textContent = text;
  box.appendChild(el);
}

columns.forEach(([names, values, nameClass, valueClass]) => {
  const list = values.split(" ");
  names.split(" ").forEach((name, r) => {
    const blank = list[r] === "-" || list[r] === "g";
    add("st" + nameClass + (shift[r] || ""), blank ? "" : name);
  });
  list.forEach((v, r) => {
    const colour = v === "-" ? "" : " " + (level[v.slice(-1)] || "lime");
    add("st val" + valueClass + colour + (shift[r] || ""), /\d/.test(v) ? v.slice(0, 4) : "");
  });
});
```
